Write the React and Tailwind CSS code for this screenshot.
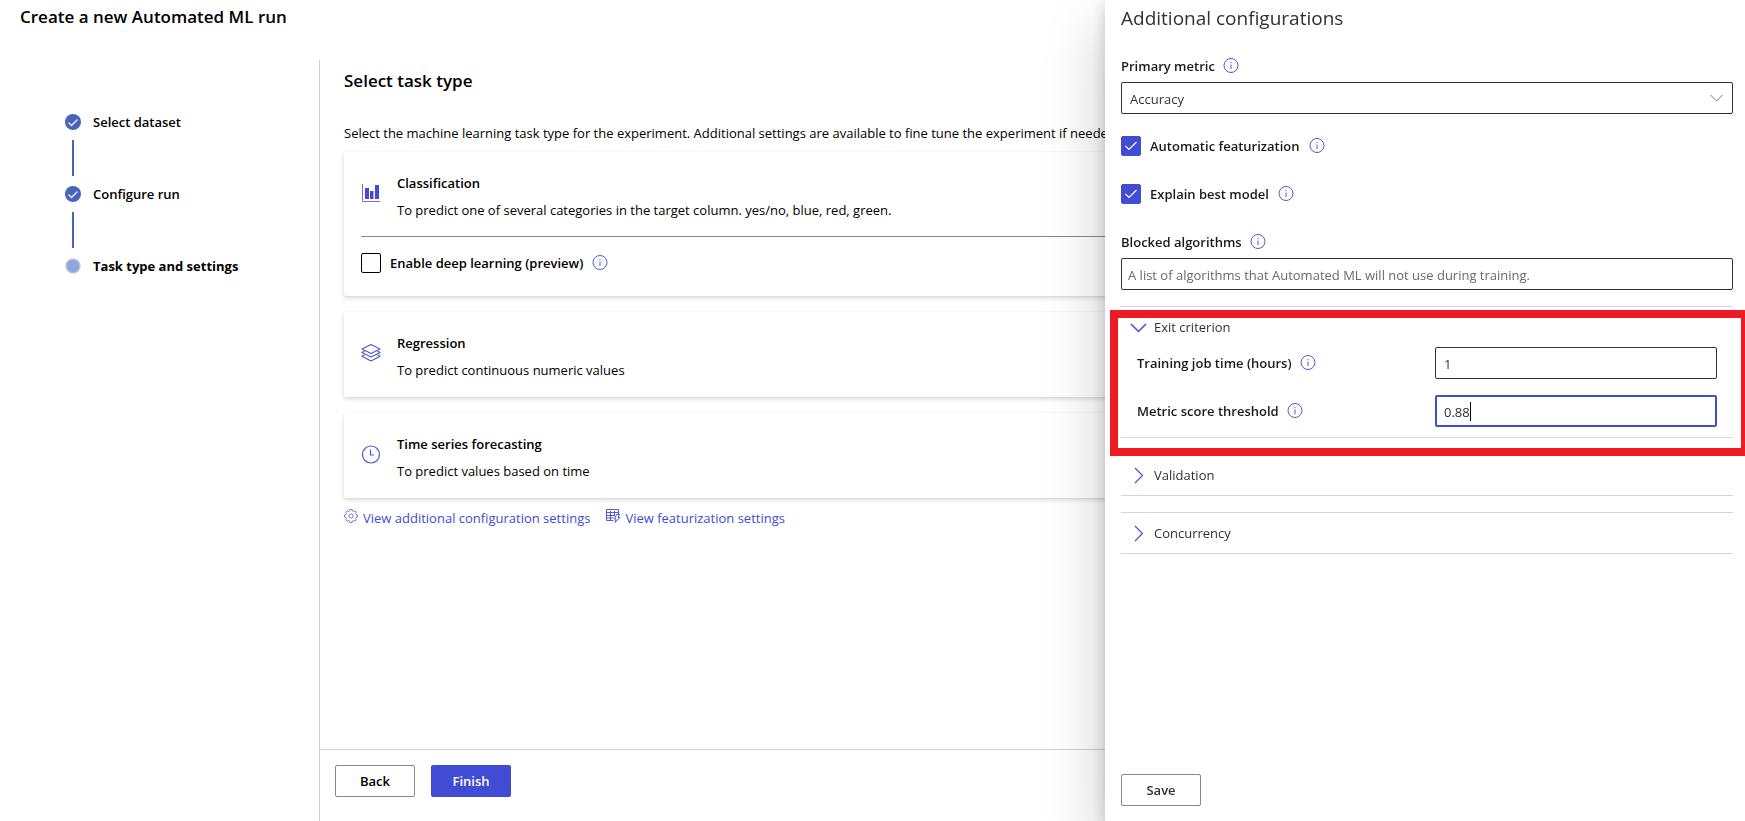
import { useState } from "react";

function InfoIcon() {
  return (
    <svg className="size-4 shrink-0 text-[#5258cf]" viewBox="0 0 16 16" fill="none" stroke="currentColor" aria-hidden="true">
      <circle cx="8" cy="7.500" r="7" />
      <path d="M8 6.500V11" />
      <path d="M8 4v1.200" />
    </svg>
  );
}

function ChartIcon() {
  return (
    <svg className="size-5" viewBox="0 0 20 20" aria-hidden="true">
      <path d="M1.500 1v17.500H19" fill="none" stroke="#7c68d8" />
      <path d="M4 5h4v11H4zM9 8h3.500v8H9zM14 2h4v14h-4z" fill="#424bd4" />
    </svg>
  );
}

function LayersIcon() {
  return (
    <svg className="size-5" viewBox="0 0 20 20" fill="none" stroke="#5258cf" strokeWidth="1.200" strokeLinejoin="round" aria-hidden="true">
      <path d="M10 1.500 19 6l-9 4.500L1 6z" />
      <path d="M3.500 8 1 9.500l9 4.500 9-4.500L16.500 8" />
      <path d="M3.500 11.800 1 13.200l9 4.800 9-4.800-2.500-1.400" />
    </svg>
  );
}

function ClockIcon() {
  return (
    <svg className="size-5" viewBox="0 0 20 20" fill="none" stroke="#5258cf" strokeWidth="1.200" aria-hidden="true">
      <circle cx="10" cy="10.500" r="8.500" />
      <path d="M9.500 5.500V11H13" />
    </svg>
  );
}

function GearIcon() {
  return (
    <svg className="mt-px size-[14px]" viewBox="1 1 14 15" fill="none" stroke="#6a6ed6" strokeLinejoin="round" aria-hidden="true">
      <path d="M6.800 1.500h2.400l.4 1.700 1.100.5 1.600-.9 1.500 1.500-.9 1.600.5 1.100 1.600.4v2.200l-1.600.4-.5 1.100.9 1.600-1.500 1.500-1.600-.9-1.100.5-.4 1.700H6.800l-.4-1.700-1.100-.5-1.600.9-1.500-1.500.9-1.600-.5-1.100-1.600-.4V7.400l1.600-.4.5-1.100-.9-1.600 1.500-1.500 1.600.9 1.100-.5z" />
      <circle cx="8" cy="8.500" r="2.200" />
    </svg>
  );
}

function TableBoltIcon() {
  return (
    <svg className="mt-px size-[14px]" viewBox="0 0 14 14" fill="none" stroke="#5258cf" aria-hidden="true">
      <path d="M7.500 11.500h-7V.5h12V5M.5 3.500h12M.5 6.500H9M.5 9h7M4.500 2v9.500M8.500 2v5" />
      <path d="M10.500 5.500h3L12 8.500h2L9 13.500l1-3.500H8.500z" />
    </svg>
  );
}

function Chevron({ open }) {
  return (
    <svg className="size-[17px]" viewBox="0 0 17 17" fill="none" stroke="#424bd4" aria-hidden="true">
      <path d={open ? "M1 5l7.500 7.500L16 5" : "M5 1l7.500 7.500L5 16"} strokeWidth={open ? 1.5 : 1.1} />
    </svg>
  );
}

function Checkbox({ id, label, defaultChecked }) {
  return (
    <div className="flex h-5 items-center gap-[9px]">
      <span className="grid size-5 shrink-0 place-items-center">
        <input
          id={id}
          type="checkbox"
          defaultChecked={defaultChecked}
          className="peer col-start-1 row-start-1 size-5 appearance-none rounded-xs border border-black bg-white checked:border-[#424bd4] checked:bg-[#424bd4]"
        />
        <svg className="pointer-events-none col-start-1 row-start-1 hidden size-5 peer-checked:block" viewBox="0 0 20 20" fill="none" stroke="#fff" strokeWidth="1.200" aria-hidden="true">
          <path d="M4.500 10l3.500 3.500L15.500 6" />
        </svg>
      </span>
      <label htmlFor={id} className="font-semibold">{label}</label>
      <InfoIcon />
    </div>
  );
}

const steps = [
  { label: "Select dataset", done: true },
  { label: "Configure run", done: true },
  { label: "Task type and settings", done: false },
];

function Stepper() {
  return (
    <ol className="flex flex-col px-16 pt-[52px]">
      {steps.map((s, i) => (
        <li key={s.label} className="flex flex-col">
          <div className="flex h-5 items-center gap-3">
            <svg className="ml-px size-4 shrink-0" viewBox="0 0 16 16" fill="none" aria-hidden="true">
              {s.done ? (
                <>
                  <circle cx="8" cy="8" r="8" fill="#4764b9" />
                  <path d="M3.500 8.500l3 3 6-6" stroke="#dfe6f7" strokeWidth="1.500" />
                </>
              ) : (
                <circle cx="8" cy="8" r="7" fill="#8aa8e0" stroke="#c8c6c4" strokeWidth="1.500" />
              )}
            </svg>
            <span className={s.done ? "font-semibold" : "font-bold"}>{s.label}</span>
          </div>
          {i < steps.length - 1 && <div className="my-2 ml-2 h-9 w-0.5 bg-[#4764b9]" />}
        </li>
      ))}
    </ol>
  );
}

function TaskCard({ icon, title, text, children }) {
  return (
    <section className="rounded-xs bg-white px-[17px] pt-[21px] pb-[17px] shadow-[0_2px_4px_rgba(0,0,0,0.16),0_0_1px_rgba(0,0,0,0.1)]">
      <div className="flex items-start gap-4">
        <div className="pt-[10px]">{icon}</div>
        <div className="leading-5">
          <h3 className="font-semibold">{title}</h3>
          <p className="mt-[7px]">{text}</p>
        </div>
      </div>
      {children}
    </section>
  );
}

function Section({ title, open, onToggle, children }) {
  return (
    <section className="border-y border-[#d6d6d6]">
      <button type="button" onClick={onToggle} aria-expanded={open} className="flex h-10 w-full items-center gap-[7px] pl-[9px]">
        <Chevron open={open} />
        <span>{title}</span>
      </button>
      {open && children}
    </section>
  );
}

export default function App() {
  const [open, setOpen] = useState({ exit: true, validation: false, concurrency: false });
  const toggle = (key) => setOpen((o) => ({ ...o, [key]: !o[key] }));

  return (
    <div className="flex h-screen flex-col overflow-hidden bg-white font-['Open_Sans','Noto_Sans',sans-serif] text-[13px] leading-5 text-black">
      <header className="flex h-[60px] shrink-0 px-5 pt-[5px]">
        <h1 className="text-[17px] leading-6 font-semibold">Create a new Automated ML run</h1>
      </header>
      <div className="flex min-h-0 flex-1">
        <nav aria-label="Steps" className="w-[319px] shrink-0">
          <Stepper />
        </nav>
        <main className="flex min-w-0 flex-1 flex-col border-l border-[#d2d2d2]">
          <div className="flex flex-1 flex-col px-6 pt-[9px]">
            <h2 className="text-[17px] leading-6 font-semibold">Select task type</h2>
            <p className="mt-[30px] mb-[9px]">
              Select the machine learning task type for the experiment. Additional settings are available to fine tune the experiment if needed.
            </p>
            <div className="flex flex-col gap-4">
              <TaskCard icon={<ChartIcon />} title="Classification" text="To predict one of several categories in the target column. yes/no, blue, red, green.">
                <hr className="my-4 border-[#8a8886]" />
                <div className="pb-[6px]">
                  <Checkbox id="deep" label="Enable deep learning (preview)" />
                </div>
              </TaskCard>
              <TaskCard icon={<LayersIcon />} title="Regression" text="To predict continuous numeric values" />
              <TaskCard icon={<ClockIcon />} title="Time series forecasting" text="To predict values based on time" />
            </div>
            <div className="mt-[10px] flex gap-4 text-[#424bd4]">
              <a href="#configuration" className="flex gap-[5px]"><GearIcon />View additional configuration settings</a>
              <a href="#featurization" className="flex gap-[5px]"><TableBoltIcon />View featurization settings</a>
            </div>
          </div>
          <footer className="flex h-[72px] shrink-0 gap-4 border-t border-[#d2d2d2] px-[15px] pt-[15px]">
            <button type="button" className="h-8 w-20 rounded-xs border border-[#8a8886] font-semibold">Back</button>
            <button type="button" className="h-8 w-20 rounded-xs bg-[#424bd4] font-semibold text-white">Finish</button>
          </footer>
        </main>
      </div>

      <aside
        aria-label="Additional configurations"
        className="fixed inset-y-0 right-0 flex w-[640px] flex-col bg-white pr-3 pl-4 text-[#323130] shadow-[0_26px_58px_rgba(0,0,0,0.22),0_5px_14px_rgba(0,0,0,0.18)]"
      >
        <h2 className="pt-1 text-[19px] leading-7">Additional configurations</h2>
        <div className="mt-6 flex h-5 items-center gap-2 text-black/90">
          <label htmlFor="metric" className="font-semibold">Primary metric</label>
          <InfoIcon />
        </div>
        <div className="mt-[6px] grid items-center">
          <select id="metric" className="col-start-1 row-start-1 h-8 w-full appearance-none rounded-xs border border-[#323130] px-2 pt-0.5">
            <option>Accuracy</option>
          </select>
          <svg className="pointer-events-none col-start-1 row-start-1 mr-[10px] h-2 w-[13px] justify-self-end" viewBox="0 0 13 8" fill="none" stroke="#7a7876" aria-hidden="true">
            <path d="M.5 1l6 6 6-6" />
          </svg>
        </div>
        <div className="mt-[22px] flex flex-col gap-7 text-black/90">
          <Checkbox id="auto" label="Automatic featurization" defaultChecked />
          <Checkbox id="explain" label="Explain best model" defaultChecked />
        </div>
        <div className="mt-7 flex h-5 items-center gap-2 text-black/90">
          <label htmlFor="blocked" className="font-semibold">Blocked algorithms</label>
          <InfoIcon />
        </div>
        <input
          id="blocked"
          placeholder="A list of algorithms that Automated ML will not use during training."
          className="mt-[6px] h-8 rounded-xs border border-[#323130] px-[6px] pt-0.5 placeholder:text-[#6b6967]"
        />
        <div className="relative mt-4 flex flex-col gap-4">
          <Section title="Exit criterion" open={open.exit} onToggle={() => toggle("exit")}>
            <div className="grid grid-cols-[298px_1fr] items-center gap-y-4 pr-4 pb-[10px] pl-4 text-black/90">
              <div className="flex items-center gap-2">
                <label htmlFor="hours" className="font-semibold">Training job time (hours)</label>
                <InfoIcon />
              </div>
              <input id="hours" defaultValue="1" className="h-8 w-full rounded-xs border border-[#323130] px-2 pt-0.5 text-[#323130]" />
              <div className="flex items-center gap-2">
                <label htmlFor="threshold" className="font-semibold">Metric score threshold</label>
                <InfoIcon />
              </div>
              <div className="relative">
                <input id="threshold" defaultValue="0.88" className="block h-8 w-full rounded-xs border-2 border-[#424bd4] px-[7px] pt-0.5 text-[#323130] caret-transparent outline-none" />
                <span className="pointer-events-none absolute top-[7px] left-[35px] h-[19px] w-px bg-black" />
              </div>
            </div>
          </Section>
          <Section title="Validation" open={open.validation} onToggle={() => toggle("validation")} />
          <Section title="Concurrency" open={open.concurrency} onToggle={() => toggle("concurrency")} />
          <div className="pointer-events-none absolute top-1 -right-4 -left-[11px] h-[146px] border-8 border-[#ed1c24]" />
        </div>
        <div className="mt-auto mb-[15px]">
          <button type="button" className="h-8 w-20 rounded-xs border border-[#8a8886] font-semibold">Save</button>
        </div>
      </aside>
    </div>
  );
}
